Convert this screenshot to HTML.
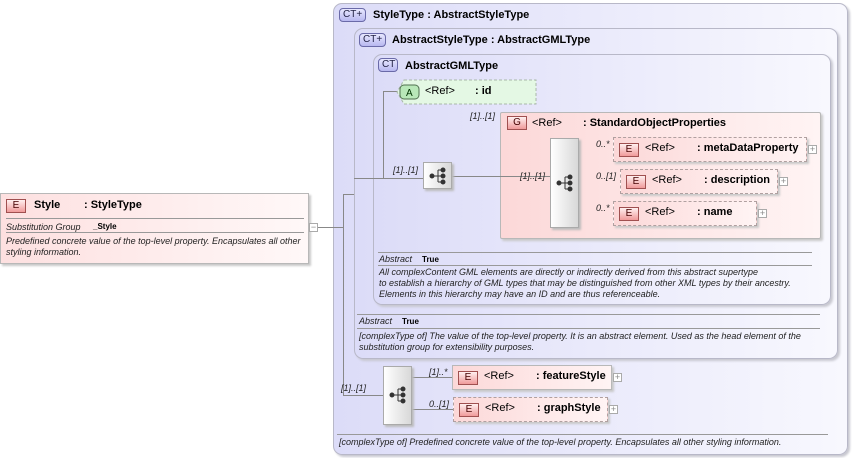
<!DOCTYPE html>
<html><head><meta charset="utf-8"><style>
*{margin:0;padding:0;box-sizing:border-box}
body{width:852px;height:458px;background:#fff;position:relative;overflow:hidden;font-family:"Liberation Sans",sans-serif;color:#000}
.a{position:absolute}
.box{position:absolute;border:1px solid #b8b8c8;border-radius:9px;background:linear-gradient(to right,#dcdcf8,#f8f8fe);box-shadow:2px 2px 2px #c8c8d0}
.t{position:absolute;font-size:11px;font-weight:bold;white-space:nowrap}
.r{position:absolute;font-size:11px;white-space:nowrap}
.i{position:absolute;font-size:9px;font-style:italic;white-space:nowrap;color:#222}
.ct{position:absolute;height:14px;border:1px solid #6a6aa8;border-radius:4px;background:linear-gradient(#e8e8ff,#b8b8f0);font-size:10px;color:#224;padding-left:3px;line-height:12px}
.eb{position:absolute;width:20px;height:14px;border:1px solid #a05050;background:linear-gradient(#fff0f0,#f09a9a);font-size:10px;text-align:center;line-height:12px;color:#400}
.el{position:absolute;background:linear-gradient(to right,#fcd8d8,#fff4f4);box-shadow:2px 2px 2px #c8c8c8}
.dash{border:1px dashed #b0a0a0}
.sol{border:1px solid #b8b8b8}
.pl{position:absolute;width:9px;height:9px;border:1px solid #aaa;background:#fff;font-size:9px;line-height:7px;text-align:center;color:#888}
.h{position:absolute;height:1px;background:#888}
.v{position:absolute;width:1px;background:#888}
.ln{position:absolute;height:1px;background:#999}
.seq{position:absolute;border:1px solid #aaa;background:linear-gradient(to right,#fff,#d8d8d8);box-shadow:2px 2px 2px #bbb}
.dt{position:absolute;font-size:9px;font-style:italic;line-height:11px;color:#222}
</style></head><body>

<div class="el sol" style="left:0;top:193px;width:309px;height:71px;background:linear-gradient(to right,#fde0e0,#fff8f8)"></div>
<div class="eb" style="left:6px;top:199px">E</div>
<div class="t" style="left:34px;top:199px">Style</div>
<div class="t" style="left:84px;top:199px">: StyleType</div>
<div class="ln" style="left:6px;top:218px;width:298px"></div>
<div class="i" style="left:6px;top:222px">Substitution Group</div>
<div class="a" style="left:93px;top:222px;font-size:8px;font-weight:bold">_Style</div>
<div class="ln" style="left:6px;top:232px;width:298px"></div>
<div class="dt" style="left:6px;top:236px">Predefined concrete value of the top-level property. Encapsulates all other<br>styling information.</div>
<div class="pl" style="left:309px;top:223px">−</div>

<div class="box" style="left:333px;top:3px;width:515px;height:452px"></div>
<div class="ct" style="left:339px;top:8px;width:27px">CT+</div>
<div class="t" style="left:373px;top:9px">StyleType : AbstractStyleType</div>

<div class="box" style="left:354px;top:28px;width:484px;height:331px"></div>
<div class="ct" style="left:359px;top:33px;width:27px">CT+</div>
<div class="t" style="left:392px;top:34px">AbstractStyleType : AbstractGMLType</div>

<div class="box" style="left:373px;top:54px;width:458px;height:251px"></div>
<div class="ct" style="left:378px;top:58px;width:20px">CT</div>
<div class="t" style="left:405px;top:60px">AbstractGMLType</div>

<div class="h" style="left:318px;top:227px;width:25px"></div>
<div class="v" style="left:343px;top:194px;height:202px"></div>
<div class="h" style="left:343px;top:194px;width:11px"></div>
<div class="h" style="left:343px;top:395px;width:40px"></div>
<div class="h" style="left:354px;top:178px;width:69px"></div>
<div class="v" style="left:383px;top:91px;height:88px"></div>
<div class="h" style="left:383px;top:91px;width:16px"></div>
<div class="h" style="left:452px;top:176px;width:98px"></div>
<div class="h" style="left:579px;top:149px;width:34px"></div>
<div class="h" style="left:579px;top:181px;width:41px"></div>
<div class="h" style="left:579px;top:213px;width:34px"></div>
<div class="h" style="left:412px;top:377px;width:40px"></div>
<div class="h" style="left:412px;top:409px;width:41px"></div>

<svg class="a" style="left:396px;top:79px" width="144" height="28"><polygon points="8,1 140,1 140,25 8,25 1,13" fill="#e4f8e4" stroke="#a8b8a8" stroke-dasharray="3,2"/><rect x="4" y="6" width="19" height="14" rx="4" fill="#b8e8b8" stroke="#507050"/><text x="10" y="17" font-size="10" font-family="Liberation Sans" fill="#030">A</text></svg>
<div class="r" style="left:425px;top:85px">&lt;Ref&gt;</div>
<div class="t" style="left:475px;top:85px">: id</div>

<div class="i" style="left:470px;top:111px">[1]..[1]</div>
<div class="i" style="left:393px;top:165px">[1]..[1]</div>
<div class="seq" style="left:423px;top:162px;width:29px;height:27px"></div>
<svg class="a" style="left:423px;top:162px" width="29" height="27"><g fill="#333" stroke="#333"><circle cx="9" cy="14" r="2"/><line x1="9" y1="14" x2="15" y2="14"/><line x1="15" y1="8" x2="15" y2="20"/><line x1="15" y1="8" x2="20" y2="8"/><line x1="15" y1="20" x2="20" y2="20"/><line x1="15" y1="14" x2="20" y2="14"/><circle cx="20" cy="8" r="2"/><circle cx="20" cy="14" r="2"/><circle cx="20" cy="20" r="2"/></g></svg>

<div class="el sol" style="left:500px;top:112px;width:321px;height:127px;border-radius:2px"></div>
<div class="eb" style="left:507px;top:116px">G</div>
<div class="r" style="left:532px;top:117px">&lt;Ref&gt;</div>
<div class="t" style="left:583px;top:117px">: StandardObjectProperties</div>
<div class="h" style="left:500px;top:176px;width:50px"></div>
<div class="i" style="left:520px;top:171px">[1]..[1]</div>
<div class="seq" style="left:550px;top:138px;width:29px;height:90px"></div>
<svg class="a" style="left:550px;top:169px" width="29" height="27"><g fill="#333" stroke="#333"><circle cx="9" cy="14" r="2"/><line x1="9" y1="14" x2="15" y2="14"/><line x1="15" y1="8" x2="15" y2="20"/><line x1="15" y1="8" x2="20" y2="8"/><line x1="15" y1="20" x2="20" y2="20"/><line x1="15" y1="14" x2="20" y2="14"/><circle cx="20" cy="8" r="2"/><circle cx="20" cy="14" r="2"/><circle cx="20" cy="20" r="2"/></g></svg>

<div class="i" style="left:596px;top:139px">0..*</div>
<div class="el dash" style="left:613px;top:137px;width:194px;height:25px"></div>
<div class="eb" style="left:619px;top:143px">E</div>
<div class="r" style="left:645px;top:142px">&lt;Ref&gt;</div>
<div class="t" style="left:697px;top:142px">: metaDataProperty</div>
<div class="pl" style="left:808px;top:145px">+</div>

<div class="i" style="left:596px;top:171px">0..[1]</div>
<div class="el dash" style="left:620px;top:169px;width:158px;height:25px"></div>
<div class="eb" style="left:626px;top:175px">E</div>
<div class="r" style="left:652px;top:174px">&lt;Ref&gt;</div>
<div class="t" style="left:704px;top:174px">: description</div>
<div class="pl" style="left:779px;top:177px">+</div>

<div class="i" style="left:596px;top:203px">0..*</div>
<div class="el dash" style="left:613px;top:201px;width:144px;height:25px"></div>
<div class="eb" style="left:619px;top:207px">E</div>
<div class="r" style="left:645px;top:206px">&lt;Ref&gt;</div>
<div class="t" style="left:697px;top:206px">: name</div>
<div class="pl" style="left:758px;top:209px">+</div>

<div class="ln" style="left:378px;top:252px;width:434px"></div>
<div class="i" style="left:379px;top:254px">Abstract</div>
<div class="a" style="left:422px;top:255px;font-size:8px;font-weight:bold">True</div>
<div class="ln" style="left:378px;top:265px;width:434px"></div>
<div class="dt" style="left:379px;top:267px">All complexContent GML elements are directly or indirectly derived from this abstract supertype<br>to establish a hierarchy of GML types that may be distinguished from other XML types by their ancestry.<br>Elements in this hierarchy may have an ID and are thus referenceable.</div>

<div class="ln" style="left:357px;top:314px;width:463px"></div>
<div class="i" style="left:359px;top:316px">Abstract</div>
<div class="a" style="left:402px;top:317px;font-size:8px;font-weight:bold">True</div>
<div class="ln" style="left:357px;top:328px;width:463px"></div>
<div class="dt" style="left:359px;top:331px">[complexType of] The value of the top-level property. It is an abstract element. Used as the head element of the<br>substitution group for extensibility purposes.</div>

<div class="i" style="left:341px;top:383px">[1]..[1]</div>
<div class="seq" style="left:383px;top:366px;width:29px;height:59px"></div>
<svg class="a" style="left:383px;top:381px" width="29" height="27"><g fill="#333" stroke="#333"><circle cx="9" cy="14" r="2"/><line x1="9" y1="14" x2="15" y2="14"/><line x1="15" y1="8" x2="15" y2="20"/><line x1="15" y1="8" x2="20" y2="8"/><line x1="15" y1="20" x2="20" y2="20"/><line x1="15" y1="14" x2="20" y2="14"/><circle cx="20" cy="8" r="2"/><circle cx="20" cy="14" r="2"/><circle cx="20" cy="20" r="2"/></g></svg>

<div class="i" style="left:429px;top:367px">[1]..*</div>
<div class="el sol" style="left:452px;top:365px;width:160px;height:25px"></div>
<div class="eb" style="left:458px;top:371px">E</div>
<div class="r" style="left:484px;top:370px">&lt;Ref&gt;</div>
<div class="t" style="left:536px;top:370px">: featureStyle</div>
<div class="pl" style="left:613px;top:373px">+</div>

<div class="i" style="left:429px;top:399px">0..[1]</div>
<div class="el dash" style="left:453px;top:397px;width:155px;height:25px"></div>
<div class="eb" style="left:459px;top:403px">E</div>
<div class="r" style="left:485px;top:402px">&lt;Ref&gt;</div>
<div class="t" style="left:537px;top:402px">: graphStyle</div>
<div class="pl" style="left:609px;top:405px">+</div>

<div class="ln" style="left:337px;top:434px;width:491px"></div>
<div class="dt" style="left:339px;top:437px">[complexType of] Predefined concrete value of the top-level property. Encapsulates all other styling information.</div>

</body></html>
